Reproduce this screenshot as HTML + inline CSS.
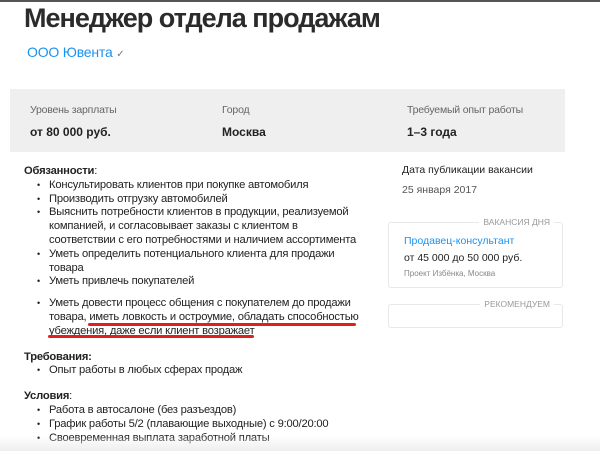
<!DOCTYPE html>
<html><head><meta charset="utf-8"><style>
*{margin:0;padding:0;box-sizing:border-box}
body{width:600px;height:451px;overflow:hidden;background:#fff;font-family:"Liberation Sans",sans-serif;color:#222;position:relative}
.a{position:absolute;white-space:nowrap}
h1{position:absolute;left:24px;top:3px;font-size:27px;font-weight:bold;color:#2b2b2b;letter-spacing:-1px;white-space:nowrap}
.panel{position:absolute;left:10px;top:89px;width:555px;height:63px;background:#efefef}
.lbl{font-size:10.5px;color:#666;letter-spacing:-0.2px}
.val{font-size:12px;font-weight:bold;color:#222}
.body{position:absolute;left:24px;top:165px;font-size:11.2px;letter-spacing:-0.2px;line-height:13.8px;color:#222;white-space:nowrap}
.body ul{list-style:none;margin-left:13px}
.body li{position:relative;padding-left:12px}
.body li:before{content:"•";position:absolute;left:0;font-size:9px}
.box{position:absolute;left:388px;width:175px;border:1px solid #e8e8e8;border-radius:3px}
.tag{position:absolute;right:8px;top:-6px;background:#fff;padding:0 4px;font-size:8.5px;color:#999}
.ul{position:absolute;height:3px;background:#e0201e;border-radius:2px}
</style></head><body>
<div class="a" style="left:0;top:0;width:600px;height:2px;background:#555"></div>
<h1>Менеджер отдела продажам</h1>
<div class="a" style="left:27px;top:44px;font-size:14px;color:#1a93f0;letter-spacing:-0.2px">ООО Ювента <span style="color:#777;font-size:10px">✓</span></div>
<div class="panel"></div>
<div class="a lbl" style="left:30px;top:104px">Уровень зарплаты</div>
<div class="a lbl" style="left:222px;top:104px">Город</div>
<div class="a lbl" style="left:407px;top:104px">Требуемый опыт работы</div>
<div class="a val" style="left:30px;top:125px">от 80 000 руб.</div>
<div class="a val" style="left:222px;top:125px">Москва</div>
<div class="a val" style="left:407px;top:125px">1–3 года</div>
<div class="body">
<div><b>Обязанности</b>:</div>
<ul>
<li>Консультировать клиентов при покупке автомобиля</li>
<li>Производить отгрузку автомобилей</li>
<li>Выяснить потребности клиентов в продукции, реализуемой<br>компанией, и согласовывает заказы с клиентом в<br>соответствии с его потребностями и наличием ассортимента</li>
<li>Уметь определить потенциального клиента для продажи<br>товара</li>
<li>Уметь привлечь покупателей</li>
<li style="margin-top:8px">Уметь довести процесс общения с покупателем до продажи<br>товара, иметь ловкость и остроумие, обладать способностью<br>убеждения, даже если клиент возражает</li>
</ul>
<div style="margin-top:12px;font-weight:bold">Требования:</div>
<ul><li>Опыт работы в любых сферах продаж</li></ul>
<div style="margin-top:12px"><b>Условия</b>:</div>
<ul>
<li>Работа в автосалоне (без разъездов)</li>
<li>График работы 5/2 (плавающие выходные) с 9:00/20:00</li>
<li>Своевременная выплата заработной платы</li>
</ul>
</div>
<div class="ul" style="left:88px;top:323px;width:268px"></div>
<div class="ul" style="left:48px;top:335px;width:206px"></div>
<div class="a" style="left:402px;top:164px;font-size:10.5px;color:#222">Дата публикации вакансии</div>
<div class="a" style="left:402px;top:184px;font-size:10.5px;color:#555">25 января 2017</div>
<div class="box" style="top:222px;height:66px"><div class="tag">ВАКАНСИЯ ДНЯ</div>
<div class="a" style="left:15px;top:12px;font-size:10.5px;color:#1a93f0">Продавец-консультант</div>
<div class="a" style="left:15px;top:29px;font-size:10.5px;color:#222">от 45 000 до 50 000 руб.</div>
<div class="a" style="left:15px;top:46px;font-size:8px;color:#888">Проект Избёнка, Москва</div>
</div>
<div class="box" style="top:304px;height:24px"><div class="tag">РЕКОМЕНДУЕМ</div></div>
<div class="a" style="left:0;top:436px;width:600px;height:15px;background:linear-gradient(#fff0,#eee)"></div>
</body></html>
